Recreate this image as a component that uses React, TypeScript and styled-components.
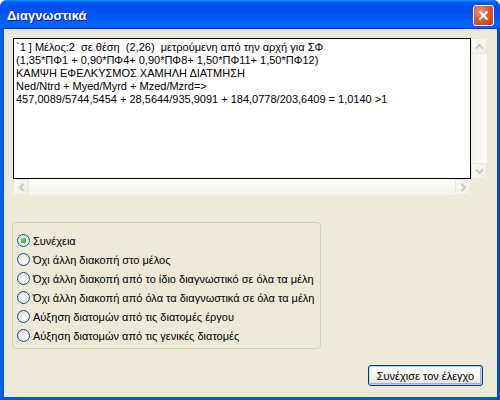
import styled, { createGlobalStyle } from 'styled-components'

const GlobalStyle = createGlobalStyle`
  html, body {
    margin: 0;
    padding: 0;
    width: 500px;
    height: 400px;
    overflow: hidden;
    background: #ffffff;
  }
  * {
    box-sizing: border-box;
  }
`

const Window = styled.div`
  width: 500px;
  height: 400px;
  display: flex;
  flex-direction: column;
  background: linear-gradient(to right, #0a5ff0 0px, #0055e5 4px, #0055e5 496px, #0044cc 500px);
  border-radius: 7px 7px 0 0;
  overflow: hidden;
  font-family: 'Liberation Sans', Arial, sans-serif;
`

const TitleBar = styled.div`
  height: 29px;
  flex: none;
  display: flex;
  align-items: center;
  justify-content: space-between;
  padding: 0 6px 0 7px;
  background: linear-gradient(
    to bottom,
    #0997ff 0%,
    #0053ee 10%,
    #0050ee 40%,
    #0066ff 86%,
    #0066ff 92%,
    #005bff 95%,
    #003dd7 97%,
    #003dd7 100%
  );
`

const Title = styled.span`
  color: #ffffff;
  font-family: 'Liberation Sans', Arial, sans-serif;
  font-weight: bold;
  font-size: 13px;
  text-shadow: 1px 1px 0 #0a1883;
  padding-top: 1px;
`

const CloseButton = styled.div`
  width: 21px;
  height: 21px;
  border: 1px solid #ffffff;
  border-radius: 3px;
  background: radial-gradient(circle at 35% 30%, #f09b7c 0%, #e0582f 45%, #c43c14 100%);
  display: flex;
  align-items: center;
  justify-content: center;
  margin-top: 2px;
`

const Client = styled.div`
  flex: 1;
  margin: 0 3px 3px 4px;
  background: #ece9d8;
  display: flex;
  flex-direction: column;
  padding: 9px 0 0 9px;
`

const TextArea = styled.div`
  display: grid;
  grid-template-columns: 458px 16px;
  grid-template-rows: 141px 16px;
`

const TextBox = styled.div`
  border: 1px solid #000000;
  background: #ffffff;
  padding: 2px 0 0 2px;
  font-size: 11px;
  line-height: 13px;
  color: #000000;
  white-space: pre;
  overflow: hidden;
`

const VTrack = styled.div`
  display: flex;
  flex-direction: column;
  justify-content: space-between;
  background: linear-gradient(to right, #f3f1ec 0%, #fefefb 100%);
`

const HTrack = styled.div`
  display: flex;
  justify-content: space-between;
  background: linear-gradient(to bottom, #fefefb 0%, #f3f1ec 100%);
`

const ScrollButton = styled.div`
  width: 16px;
  height: 16px;
  flex: none;
  border: 1px solid #e8e6de;
  border-radius: 2px;
  background: linear-gradient(to bottom right, #f9f8f3 0%, #eeede5 100%);
  display: flex;
  align-items: center;
  justify-content: center;
`

const GroupBox = styled.div`
  margin-top: 27px;
  width: 309px;
  height: 127px;
  margin-left: -1px;
  border: 1px solid #d0d0bf;
  border-radius: 4px;
  padding: 8px 0 0 4px;
  display: flex;
  flex-direction: column;
`

const RadioRow = styled.label`
  display: flex;
  align-items: center;
  height: 19px;
  gap: 3px;
  font-size: 11px;
  color: #000000;
`

const RadioCircle = styled.span<{ $checked: boolean }>`
  width: 13px;
  height: 13px;
  flex: none;
  border-radius: 50%;
  border: 1px solid #1c5180;
  background: radial-gradient(circle at 65% 65%, #ffffff 0%, #e8e8e2 60%, #d4d4cc 100%);
  display: flex;
  align-items: center;
  justify-content: center;
  &::after {
    content: '';
    width: 5px;
    height: 5px;
    border-radius: 50%;
    background: ${p => (p.$checked ? 'radial-gradient(circle at 40% 40%, #6fe06f 0%, #21a121 70%)' : 'transparent')};
  }
`

const Footer = styled.div`
  flex: 1;
  display: flex;
  justify-content: flex-end;
  align-items: flex-end;
  padding: 0 14px 11px 0;
`

const PushButton = styled.button`
  width: 115px;
  height: 21px;
  border: 1px solid #003c74;
  border-radius: 3px;
  background: linear-gradient(to bottom, #ffffff 0%, #f4f3ee 60%, #e3e1d8 100%);
  box-shadow: inset 0 0 0 1px #b8d2f8, inset -1px -1px 0 1px #8fb3ea;
  font-family: 'Liberation Sans', Arial, sans-serif;
  font-size: 11px;
  color: #000000;
  padding: 0;
`

const lines = [
  '`1 ] Μέλος:2  σε θέση  (2,26)  μετρούμενη από την αρχή για ΣΦ',
  '(1,35*ΠΦ1 + 0,90*ΠΦ4+ 0,90*ΠΦ8+ 1,50*ΠΦ11+ 1,50*ΠΦ12)',
  'ΚΑΜΨΗ ΕΦΕΛΚΥΣΜΟΣ ΧΑΜΗΛΗ ΔΙΑΤΜΗΣΗ',
  'Ned/Ntrd + Myed/Myrd + Mzed/Mzrd=>',
  '457,0089/5744,5454 + 28,5644/935,9091 + 184,0778/203,6409 = 1,0140 >1',
]

const options = [
  'Συνέχεια',
  'Όχι άλλη διακοπή στο μέλος',
  'Όχι άλλη διακοπή από το ίδιο διαγνωστικό σε όλα τα μέλη',
  'Όχι άλλη διακοπή από όλα τα διαγνωστικά σε όλα τα μέλη',
  'Αύξηση διατομών από τις διατομές έργου',
  'Αύξηση διατομών από τις γενικές διατομές',
]

const Chevron = ({ dir }: { dir: 'up' | 'down' | 'left' | 'right' }) => {
  const rot = { up: 0, right: 90, down: 180, left: 270 }[dir]
  return (
    <svg width="9" height="9" viewBox="0 0 9 9" style={{ transform: `rotate(${rot}deg)` }}>
      <path d="M1 6.5 L4.5 3 L8 6.5" fill="none" stroke="#c9c7ba" strokeWidth="2" />
    </svg>
  )
}

const App = () => {
  return (
    <>
      <GlobalStyle />
      <Window>
        <TitleBar>
          <Title>Διαγνωστικά</Title>
          <CloseButton>
            <svg width="11" height="11" viewBox="0 0 11 11">
              <path d="M1.5 1.5 L9.5 9.5 M9.5 1.5 L1.5 9.5" stroke="#ffffff" strokeWidth="2" />
            </svg>
          </CloseButton>
        </TitleBar>
        <Client>
          <TextArea>
            <TextBox>{lines.join('\n')}</TextBox>
            <VTrack>
              <ScrollButton>
                <Chevron dir="up" />
              </ScrollButton>
              <ScrollButton>
                <Chevron dir="down" />
              </ScrollButton>
            </VTrack>
            <HTrack>
              <ScrollButton>
                <Chevron dir="left" />
              </ScrollButton>
              <ScrollButton>
                <Chevron dir="right" />
              </ScrollButton>
            </HTrack>
          </TextArea>
          <GroupBox>
            {options.map((o, i) => (
              <RadioRow key={o}>
                <RadioCircle $checked={i === 0} />
                {o}
              </RadioRow>
            ))}
          </GroupBox>
          <Footer>
            <PushButton>Συνέχισε τον έλεγχο</PushButton>
          </Footer>
        </Client>
      </Window>
    </>
  )
}

export default App
